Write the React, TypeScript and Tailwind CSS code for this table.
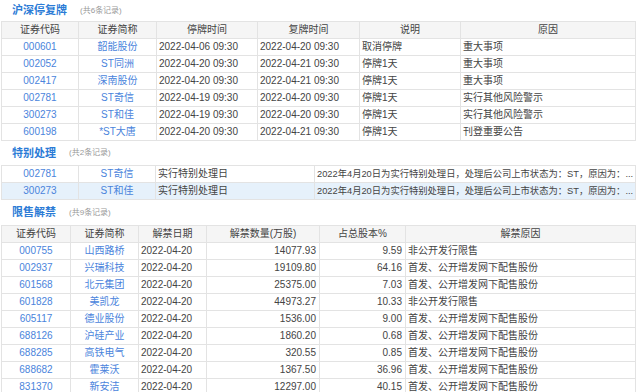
import type { ReactNode } from 'react';

const FONT = '"Liberation Sans", "Noto Sans CJK SC", sans-serif';

const suspendRows = [
  ['000601', '韶能股份', '2022-04-06 09:30', '2022-04-20 09:30', '取消停牌', '重大事项'],
  ['002052', 'ST同洲', '2022-04-20 09:30', '2022-04-21 09:30', '停牌1天', '重大事项'],
  ['002417', '深南股份', '2022-04-20 09:30', '2022-04-21 09:30', '停牌1天', '重大事项'],
  ['002781', 'ST奇信', '2022-04-19 09:30', '2022-04-20 09:30', '停牌1天', '实行其他风险警示'],
  ['300273', 'ST和佳', '2022-04-19 09:30', '2022-04-20 09:30', '停牌1天', '实行其他风险警示'],
  ['600198', '*ST大唐', '2022-04-20 09:30', '2022-04-21 09:30', '停牌1天', '刊登重要公告'],
];

const specialRows = [
  ['002781', 'ST奇信', '实行特别处理日', '2022年4月20日为实行特别处理日，处理后公司上市状态为：ST，原因为：...'],
  ['300273', 'ST和佳', '实行特别处理日', '2022年4月20日为实行特别处理日，处理后公司上市状态为：ST，原因为：...'],
];

const unlockRows = [
  ['000755', '山西路桥', '2022-04-20', '14077.93', '9.59', '非公开发行限售'],
  ['002937', '兴瑞科技', '2022-04-20', '19109.80', '64.16', '首发、公开增发网下配售股份'],
  ['601568', '北元集团', '2022-04-20', '25375.00', '7.03', '首发、公开增发网下配售股份'],
  ['601828', '美凯龙', '2022-04-20', '44973.27', '10.33', '非公开发行限售'],
  ['605117', '德业股份', '2022-04-20', '1536.00', '9.00', '首发、公开增发网下配售股份'],
  ['688126', '沪硅产业', '2022-04-20', '1860.20', '0.68', '首发、公开增发网下配售股份'],
  ['688285', '高铁电气', '2022-04-20', '320.55', '0.85', '首发、公开增发网下配售股份'],
  ['688682', '霍莱沃', '2022-04-20', '1367.50', '36.96', '首发、公开增发网下配售股份'],
  ['831370', '新安洁', '2022-04-20', '12297.00', '40.15', '首发、公开增发网下配售股份'],
];

const SectionTitle = ({ title, count, className }: { title: string; count: number; className: string }) => (
  <div className={`flex items-center pl-[12px] ${className}`}>
    <span className="text-[11px] font-bold text-[#2b7bd6]">{title}</span>
    <span className="ml-[13px] text-[8px] text-[#999]">(共{count}条记录)</span>
  </div>
);

const Th = ({ children }: { children: ReactNode }) => (
  <th className="h-[16px] border border-[#e3e3e3] bg-[#f5f5f5] p-0 text-center text-[10px] font-normal leading-[16px] text-[#444]">
    {children}
  </th>
);

type Align = 'left' | 'right' | 'link' | 'long';

const Td = ({ children, align }: { children: ReactNode; align: Align }) => {
  let cls = 'text-left pl-[2px] text-[#444] text-[10px]';
  if (align === 'link') cls = 'text-center text-[#4a84dc] text-[10px]';
  if (align === 'right') cls = 'text-right pr-[3px] text-[#444] text-[10px]';
  if (align === 'long') cls = 'text-left pl-[2px] text-[#444] text-[9.3px]';
  return (
    <td className={`h-[16px] overflow-hidden whitespace-nowrap border border-[#e3e3e3] p-0 leading-[16px] ${cls}`}>
      {children}
    </td>
  );
};

export default function App() {
  return (
    <div className="h-[392px] w-[640px] overflow-hidden bg-white" style={{ fontFamily: FONT }}>
      <SectionTitle title="沪深停复牌" count={6} className="h-[21px]" />
      <table className="ml-[1px] w-[635px] table-fixed border-collapse">
        <colgroup>
          <col className="w-[77px]" />
          <col className="w-[78px]" />
          <col className="w-[101px]" />
          <col className="w-[102px]" />
          <col className="w-[101px]" />
          <col />
        </colgroup>
        <thead>
          <tr>
            <Th>证券代码</Th>
            <Th>证券简称</Th>
            <Th>停牌时间</Th>
            <Th>复牌时间</Th>
            <Th>说明</Th>
            <Th>原因</Th>
          </tr>
        </thead>
        <tbody>
          {suspendRows.map((r) => (
            <tr key={r[0]}>
              <Td align="link">{r[0]}</Td>
              <Td align="link">{r[1]}</Td>
              <Td align="left">{r[2]}</Td>
              <Td align="left">{r[3]}</Td>
              <Td align="left">{r[4]}</Td>
              <Td align="left">{r[5]}</Td>
            </tr>
          ))}
        </tbody>
      </table>

      <SectionTitle title="特别处理" count={2} className="h-[24px]" />
      <table className="ml-[1px] w-[635px] table-fixed border-collapse">
        <colgroup>
          <col className="w-[77px]" />
          <col className="w-[77px]" />
          <col className="w-[159px]" />
          <col />
        </colgroup>
        <tbody>
          {specialRows.map((r, i) => (
            <tr key={r[0]} className={i === 1 ? 'bg-[#e6f1fb]' : ''}>
              <Td align="link">{r[0]}</Td>
              <Td align="link">{r[1]}</Td>
              <Td align="left">{r[2]}</Td>
              <Td align="long">{r[3]}</Td>
            </tr>
          ))}
        </tbody>
      </table>

      <SectionTitle title="限售解禁" count={9} className="h-[25px]" />
      <table className="ml-[1px] w-[635px] table-fixed border-collapse">
        <colgroup>
          <col className="w-[69px]" />
          <col className="w-[68px]" />
          <col className="w-[68px]" />
          <col className="w-[113px]" />
          <col className="w-[86px]" />
          <col />
        </colgroup>
        <thead>
          <tr>
            <Th>证券代码</Th>
            <Th>证券简称</Th>
            <Th>解禁日期</Th>
            <Th>解禁数量(万股)</Th>
            <Th>占总股本%</Th>
            <Th>解禁原因</Th>
          </tr>
        </thead>
        <tbody>
          {unlockRows.map((r) => (
            <tr key={r[0]}>
              <Td align="link">{r[0]}</Td>
              <Td align="link">{r[1]}</Td>
              <Td align="left">{r[2]}</Td>
              <Td align="right">{r[3]}</Td>
              <Td align="right">{r[4]}</Td>
              <Td align="left">{r[5]}</Td>
            </tr>
          ))}
        </tbody>
      </table>
    </div>
  );
}
